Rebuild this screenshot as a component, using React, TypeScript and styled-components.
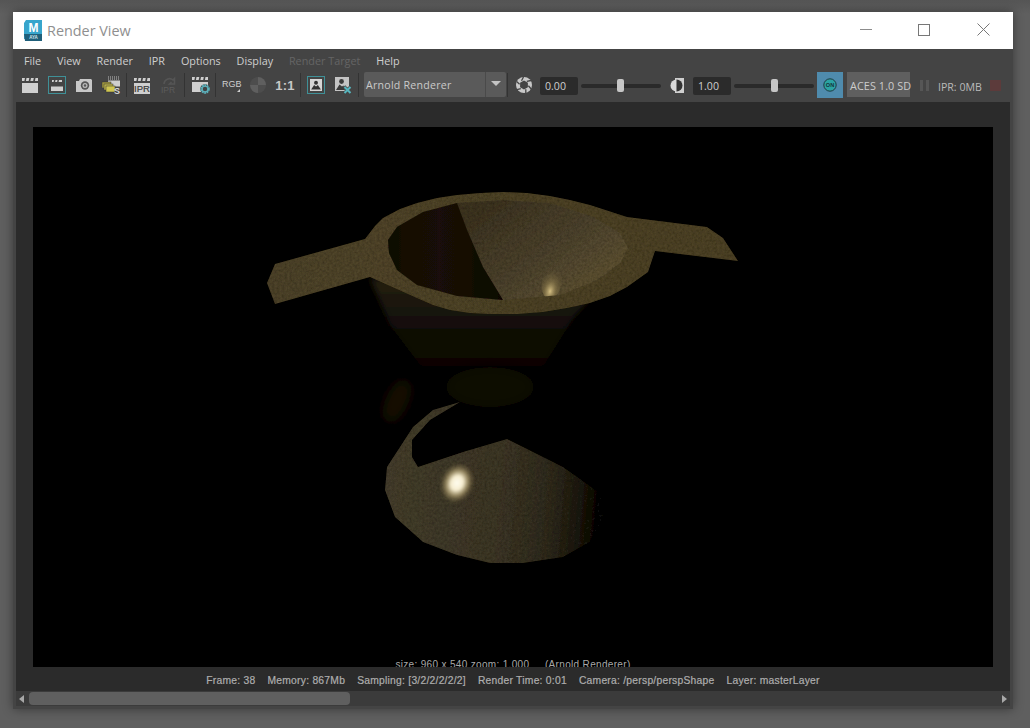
import React from "react";
import styled, { createGlobalStyle } from "styled-components";

const Global = createGlobalStyle`
  html, body { margin: 0; padding: 0; height: 728px; overflow: hidden; background: #5e5e5e; }
  #root { height: 728px; }
`;
const UI = `"Open Sans", "Noto Sans", sans-serif`;

const Desktop = styled.div`
  width: 1030px; height: 728px; box-sizing: border-box; padding: 12px 17px 19px 13px;
  background: linear-gradient(180deg, #555 0, #5f5f5f 14px, #5f5f5f 100%);
`;
const Win = styled.div`
  height: 100%; display: flex; flex-direction: column; background: #444;
  box-shadow: 0 0 10px rgba(0,0,0,.42);
`;
const TitleBar = styled.div`height: 37px; background: #fff; display: flex; align-items: center; padding-left: 10px;`;
const TitleText = styled.div`margin-left: 5px; font: 400 14.4px ${UI}; color: #8f8f8f; flex: 1;`;
const WinBtn = styled.div<{ $w: number }>`
  width: ${p => p.$w}px; height: 35px; margin-bottom: 2px; display: flex; align-items: center; justify-content: center; svg { display: block; }
`;
const MenuBar = styled.div`height: 23px; display: flex; align-items: center; padding-left: 11px; gap: 15.9px;`;
const MenuItem = styled.span<{ $dim?: boolean }>`
  font: 400 10.8px ${UI}; color: ${p => (p.$dim ? "#646464" : "#cfcfcf")};
`;
const Toolbar = styled.div`height: 30px; display: flex; align-items: flex-start; padding-left: 9px; box-sizing: border-box;`;
const Slot = styled.div<{ $w: number; $ml?: number; $boxed?: boolean }>`
  width: ${p => p.$w}px; height: 18px; margin: 4px 0 0 ${p => p.$ml ?? 0}px; flex: none; box-sizing: border-box;
  display: flex; align-items: center; justify-content: center;
  border: ${p => (p.$boxed ? "1px solid #3f9097" : "none")};
  svg { display: block; overflow: visible; }
`;
const Sep = styled.div<{ $ml: number }>`width: 1px; height: 24px; margin: 1px 0 0 ${p => p.$ml}px; background: #333; flex: none;`;
const RatioLabel = styled.span`font: 700 13px "Liberation Sans", sans-serif; color: #c8c8c8; letter-spacing: .2px;`;
const Dropdown = styled.div`
  width: 142px; height: 25px; margin: 0 0 0 5px; flex: none; display: flex; background: #5a5a5a; border-radius: 2px;
`;
const DropLabel = styled.div`flex: 1; padding-left: 2px; font: 400 10.6px/27px ${UI}; letter-spacing: .25px; color: #cacaca;`;
const DropArrow = styled.div`
  width: 20px; border-left: 1px solid #4a4a4a; display: flex; align-items: center; justify-content: center;
  &::after { content: ""; border: 5px solid transparent; border-top: 5px solid #c4c4c4; border-bottom: 0; margin-top: -3px; width: 0; height: 0; }
`;
const NumBox = styled.div<{ $ml: number }>`
  width: 38px; height: 18px; margin: 5px 0 0 ${p => p.$ml}px; flex: none; box-sizing: border-box; padding-left: 5px;
  background: #2b2b2b; border-radius: 2px; font: 400 10.6px/19px ${UI}; color: #cfcfcf;
`;
const Slider = styled.div<{ $ml: number }>`
  position: relative; width: 80px; height: 4px; margin: 12px 0 0 ${p => p.$ml}px; flex: none; background: #2a2a2a; border-radius: 2px;
`;
const Thumb = styled.div<{ $at: number }>`position: absolute; left: ${p => p.$at}px; top: -5px; width: 7px; height: 13px; border-radius: 2px; background: #c6c6c6;`;
const OnBtn = styled.div`
  width: 26px; height: 26px; margin-left: 3px; flex: none; background: #4f8bad; display: flex; align-items: center; justify-content: center;
`;
const Aces = styled.div`
  width: 63px; height: 25px; margin-left: 4px; flex: none; background: #5f5f5f; white-space: nowrap;
  padding-left: 3px; box-sizing: border-box; font: 400 10.8px/27px ${UI}; letter-spacing: .1px; color: #cccccc;
`;
const Mem = styled.div`margin-left: 9px; flex: none; font: 400 10.6px/30px ${UI}; color: #b9b9b9;`;
const Stop = styled.div`width: 11px; height: 11px; margin: 8px 0 0 8px; flex: none; background: #5c3b3b;`;
const Viewport = styled.div`flex: 1; margin: 0 3px; background: #2b2b2b; padding: 25px 17px 0; min-height: 0;`;
const Frame = styled.div`position: relative; width: 960px; height: 540px; background: #000; overflow: hidden; svg { display: block; }`;
const Overlay = styled.div`
  position: absolute; left: 0; right: 0; bottom: -3px; text-align: center; white-space: pre;
  font: 400 10px "Liberation Sans", sans-serif; letter-spacing: .33px; color: #a8a8a8;
`;
const Status = styled.div`height: 24px; padding-top: 2px; box-sizing: border-box; display: flex; justify-content: center; align-items: center; gap: 12px;`;
const StatusItem = styled.span`font: 400 10.3px "Liberation Sans", sans-serif; letter-spacing: .25px; color: #aeaeae; -webkit-text-stroke: .2px #aeaeae;`;
const Scroll = styled.div`
  height: 15px; margin: 0 3px 3px; background: #3b3b3b; display: flex; align-items: center; justify-content: space-between; padding: 0 3px;
`;
const ScrollThumb = styled.div`width: 321px; height: 13px; margin: 0 auto 0 5px; background: #5f5f5f; border-radius: 4px;`;
const Arrow = styled.div<{ $right?: boolean }>`
  width: 0; height: 0; border: 4px solid transparent;
  ${p => p.$right ? "border-left: 5px solid #a8a8a8; border-right: 0;" : "border-right: 5px solid #a8a8a8; border-left: 0;"}
`;

const Dashes = ({ c = "#cfcfcf" }: { c?: string }) => (
  <path d="M0 1h3l-.6 3H0zM4.500 1h2.800l-.6 3H3.900zM9 1h2.800l-.6 3H8.400zM13.500 1H16v3h-3.100z" fill={c} />
);
const Clapper = () => (
  <svg width="16" height="16" viewBox="0 0 16 16"><Dashes /><rect y="6" width="16" height="10" fill="#d0d0d0" /></svg>
);
const ClapperBoxed = () => (
  <svg width="12" height="11" viewBox="0 0 12 11"><path d="M1 0h2l-.4 2H1zM4.500 0h2l-.4 2h-2zM8 0h3v2H7.600z" fill="#cfcfcf" /><rect y="6.500" width="12" height="4.500" fill="#cfcfcf" /></svg>
);
const Camera = () => (
  <svg width="16" height="13" viewBox="0 0 16 13"><path d="M0 2h3l1-2h11l1 1v12H0z" fill="#c8c8c8" /><circle cx="9" cy="6.500" r="4.200" fill="#555" /><circle cx="9" cy="6.500" r="2.500" fill="#bbb" /><circle cx="9" cy="6.500" r="1.200" fill="#555" /></svg>
);
const Snap = () => (
  <svg width="18" height="18" viewBox="0 0 18 18">
    <path d="M6 1h12M6 3h12" stroke="#bcbcbc" strokeWidth="1" strokeDasharray="1 1" />
    <rect x="6" y="4.500" width="12" height="6" fill="#cfcfcf" />
    <rect x="0" y="6" width="9" height="6" fill="#a49b3e" stroke="#333" strokeWidth=".5" />
    <rect x="2" y="8" width="9" height="6" fill="#bdb44b" stroke="#333" strokeWidth=".5" />
    <rect x="4" y="10" width="9" height="6" fill="#cfc650" stroke="#333" strokeWidth=".5" />
    <text x="12" y="18" fontSize="9" fontWeight="700" fontFamily="Liberation Sans" fill="#d8d8d8">S</text>
  </svg>
);
const IprClapper = () => (
  <svg width="16" height="17" viewBox="0 0 16 17"><Dashes /><rect y="6" width="16" height="11" fill="#cfcfcf" />
    <text x="8" y="15.200" textAnchor="middle" fontSize="9.500" fontFamily="Liberation Sans" stroke="#383838" strokeWidth=".2" fill="#383838">IPR</text></svg>
);
const IprDim = () => (
  <svg width="18" height="18" viewBox="0 0 18 18">
    <path d="M4 8a5.500 5.500 0 0 1 9-4l1.500-1.500V8h-5L11.500 6M14 8" fill="none" stroke="#555" strokeWidth="1.600" />
    <text x="8" y="17" textAnchor="middle" fontSize="8.500" fontFamily="Liberation Sans" fill="#5c5c5c">IPR</text>
  </svg>
);
const ClapGear = () => (
  <svg width="18" height="18" viewBox="0 0 18 18"><Dashes />
    <rect y="6" width="16" height="10" fill="#d0d0d0" />
    <circle cx="13" cy="13" r="4.800" fill="#444" />
    <circle cx="13" cy="13" r="3.800" fill="none" stroke="#5cb2bd" strokeWidth="2" strokeDasharray="1.800 .6" />
    <circle cx="13" cy="13" r="2.800" fill="none" stroke="#5cb2bd" strokeWidth="1.100" />
  </svg>
);
const Rgb = () => (
  <svg width="18" height="16" viewBox="0 0 18 16"><text x="0" y="9.500" fontSize="9" fontFamily="Liberation Sans" fill="#cfcfcf">RGB</text><path d="M15 15h3v-3z" fill="#cfcfcf" /></svg>
);
const Checker = () => (
  <svg width="16" height="16" viewBox="0 0 16 16">
    <path d="M8 8V0a8 8 0 0 0-8 8z" fill="#4d4d4d" /><path d="M8 8V0a8 8 0 0 1 8 8z" fill="#5f5f5f" />
    <path d="M8 8v8a8 8 0 0 1-8-8z" fill="#5f5f5f" /><path d="M8 8v8a8 8 0 0 0 8-8z" fill="#4d4d4d" />
  </svg>
);
const Picture = ({ s = 16 }: { s?: number }) => (
  <svg width={s} height={s} viewBox="0 0 16 16"><rect width="16" height="16" fill="#d6d6d6" />
    <circle cx="8" cy="5" r="2.600" fill="#333" /><path d="M1.500 14l4-6 2.500 2 2.500-2 4 6z" fill="#333" /></svg>
);
const PictureX = () => (
  <svg width="17" height="17" viewBox="0 0 17 17"><rect width="14" height="14" fill="#c4c4c4" />
    <circle cx="6.500" cy="4.500" r="2.400" fill="#3a3a3a" /><path d="M1 13l3.500-5.500 2.500 2 1.500-1 1.500 4.500z" fill="#3a3a3a" />
    <path d="M9 9.500l7 7M16 9.500l-7 7" stroke="#444" strokeWidth="3.400" />
    <path d="M9.500 10l6 6M15.500 10l-6 6" stroke="#57b6bf" strokeWidth="2" /></svg>
);
const ApertureIcon = () => (
  <svg width="16" height="16" viewBox="0 0 16 16"><circle cx="8" cy="8" r="8" fill="#c8c8c8" />
    <path d="M5.500 3.800L7.500 0M10.800 4.300L15 3.500M12.400 8.800L15.200 12M9.800 12.200L9.800 16M4.800 11.600L1 12.600M3.600 7.200L.6 4.500" stroke="#444" strokeWidth="1.300" />
    <path d="M8 3.500l3.900 2.300v4.400L8 12.500 4.100 10.200V5.800z" fill="#444" /></svg>
);
const ContrastIcon = () => (
  <svg width="15" height="15" viewBox="0 0 15 15"><rect x="6" width="9" height="15" fill="#cfcfcf" />
    <path d="M7.500 1.500a6 6 0 0 0 0 12z" fill="#d8d8d8" /><path d="M7.500 1.500a6 6 0 0 1 0 12z" fill="#333" /></svg>
);
const OnIcon = () => (
  <svg width="14" height="14" viewBox="0 0 14 14"><circle cx="7" cy="7" r="6.200" fill="#2ba3a3" stroke="#1f3a40" strokeWidth="1" />
    <text x="7" y="9.100" textAnchor="middle" fontSize="5.600" fontWeight="700" fontFamily="Liberation Sans" fill="#16323a">ON</text></svg>
);
const Pause = () => (
  <svg width="9" height="11" viewBox="0 0 9 11"><rect width="3" height="11" fill="#565656" /><rect x="6" width="3" height="11" fill="#565656" /></svg>
);
const Logo = () => (
  <svg width="19" height="21" viewBox="0 0 19 21">
    <path d="M3 0h16v19H1V3z" fill="#37a5cc" />
    <path d="M1 14h18v7H2z" fill="#1f5f7a" />
    <text x="10.500" y="12" textAnchor="middle" fontSize="12" fontWeight="700" fontFamily="Liberation Sans" fill="#fff">M</text>
    <text x="10.500" y="19" textAnchor="middle" fontSize="4.500" fontWeight="700" fontFamily="Liberation Sans" fill="#cfe6ef">AYA</text>
  </svg>
);

const rim = "267,283 275,264 365,239 375,226 383,218 400,209 417,203 437,198 457,195 480,193 503,192 527,193 550,196 570,200 590,205 627,217 707,227 723,238 738,261 655,251 648,272 627,287 610,296 590,303 567,308 543,312 517,314 490,314 470,313 450,310 433,305 417,298 370,277 275,304";
const hole = "388,240 397,227 423,212 457,203 503,200 550,203 593,217 620,233 628,248 620,263 597,280 560,295 503,300 457,296 417,285 397,270 389,253";
const shadowPart = "388,240 397,227 423,212 457,203 467,230 483,267 503,300 457,296 417,285 397,270 389,253";
const lower = "460,402 433,410 413,427 387,467 385,490 395,517 423,542 457,555 490,563 523,563 563,557 590,542 604,517 600,493 563,467 507,439 463,452 418,467 412,457 412,440 430,420";

const RenderImage = () => (
  <svg width="960" height="540" viewBox="33 127 960 540">
    <defs>
      <clipPath id="holeClip"><polygon points={hole} /></clipPath>
      <filter id="soft" x="-5%" y="-5%" width="110%" height="110%"><feGaussianBlur stdDeviation=".7" /></filter>
      <filter id="blur3" x="-40%" y="-40%" width="180%" height="180%"><feGaussianBlur stdDeviation="3" /></filter>
      <filter id="blur1" x="-40%" y="-40%" width="180%" height="180%"><feGaussianBlur stdDeviation="1" /></filter>
      <filter id="blur6" x="-60%" y="-60%" width="220%" height="220%"><feGaussianBlur stdDeviation="6" /></filter>
      <filter id="grain" x="0" y="0" width="100%" height="100%">
        <feTurbulence type="fractalNoise" baseFrequency=".4" numOctaves="3" seed="4" result="n" />
        <feColorMatrix in="n" type="matrix" values="0 0 0 0 0  0 0 0 0 0  0 0 0 0 0  .7 0 0 0 -.22" result="a" />
        <feComposite in="a" in2="SourceAlpha" operator="in" result="speck" />
        <feMerge><feMergeNode in="SourceGraphic" /><feMergeNode in="speck" /></feMerge>
      </filter>
      <linearGradient id="rimG" x1="267" x2="738" y1="0" y2="0" gradientUnits="userSpaceOnUse">
        <stop offset="0" stopColor="#4d432a" /><stop offset=".25" stopColor="#514529" /><stop offset=".55" stopColor="#4d4328" /><stop offset="1" stopColor="#4d4228" />
      </linearGradient>
      <linearGradient id="holeG" x1="500" x2="570" y1="200" y2="295" gradientUnits="userSpaceOnUse">
        <stop offset="0" stopColor="#3e3523" /><stop offset=".6" stopColor="#4d432e" /><stop offset="1" stopColor="#5c5033" />
      </linearGradient>
      <linearGradient id="darkG" x1="388" x2="503" y1="0" y2="0" gradientUnits="userSpaceOnUse">
        <stop offset="0" stopColor="#0f0a04" /><stop offset=".45" stopColor="#1a1007" /><stop offset="1" stopColor="#0a0603" />
      </linearGradient>
      <linearGradient id="bodyG" x1="0" x2="0" y1="277" y2="375" gradientUnits="userSpaceOnUse">
        <stop offset="0" stopColor="#262011" /><stop offset=".5" stopColor="#120e07" /><stop offset="1" stopColor="#040302" />
      </linearGradient>
      <linearGradient id="lowerG" x1="385" x2="612" y1="490" y2="510" gradientUnits="userSpaceOnUse">
        <stop offset="0" stopColor="#453e2d" /><stop offset=".5" stopColor="#3d3727" /><stop offset=".72" stopColor="#312c1f" /><stop offset=".88" stopColor="#1b1811" /><stop offset="1" stopColor="#020201" />
      </linearGradient>
      <radialGradient id="spotA" cx=".5" cy=".5" r=".5">
        <stop offset="0" stopColor="#fffdf0" /><stop offset=".35" stopColor="#f6edcf" /><stop offset=".62" stopColor="#a8986c" stopOpacity=".8" /><stop offset="1" stopColor="#6a5c38" stopOpacity="0" />
      </radialGradient>
      <radialGradient id="spotB" cx=".5" cy=".78" r=".7">
        <stop offset="0" stopColor="#d6c084" /><stop offset=".4" stopColor="#8b7a4c" stopOpacity=".65" /><stop offset="1" stopColor="#5a4e30" stopOpacity="0" />
      </radialGradient>
    </defs>
    <polygon points="370,278 390,325 425,372 540,372 572,320 590,298" fill="url(#bodyG)" filter="url(#blur3)" />
    <ellipse cx="397" cy="401" rx="11" ry="23" transform="rotate(25 397 401)" fill="#151006" filter="url(#blur6)" />
    <ellipse cx="490" cy="387" rx="44" ry="20" fill="#0c0905" filter="url(#blur6)" />
    <g filter="url(#grain)">
      <g filter="url(#soft)">
        <polygon points={rim} fill="url(#rimG)" />
        <polygon points={hole} fill="url(#holeG)" />
      </g>
    </g>
    <polygon points={shadowPart} fill="url(#darkG)" filter="url(#soft)" />
    <g clipPath="url(#holeClip)">
      <ellipse cx="552" cy="282" rx="10" ry="17" transform="rotate(12 552 282)" fill="url(#spotB)" />
    </g>
    <g filter="url(#grain)">
      <polygon points={lower} fill="url(#lowerG)" filter="url(#soft)" />
    </g>
    <ellipse cx="457" cy="483" rx="17" ry="21" transform="rotate(22 457 483)" fill="url(#spotA)" filter="url(#blur1)" />
  </svg>
);

export default function App() {
  return (
    <Desktop>
      <Global />
      <Win>
        <TitleBar>
          <Logo />
          <TitleText>Render View</TitleText>
          <WinBtn $w={56}><svg width="12" height="1"><rect width="12" height="1" fill="#8c8c8c" /></svg></WinBtn>
          <WinBtn $w={60}><svg width="12" height="12"><rect x=".5" y=".5" width="11" height="11" fill="none" stroke="#777" /></svg></WinBtn>
          <WinBtn $w={59}><svg width="13" height="13"><path d="M.5.5l12 12M12.500.5l-12 12" stroke="#777" fill="none" /></svg></WinBtn>
        </TitleBar>
        <MenuBar>
          <MenuItem>File</MenuItem><MenuItem>View</MenuItem><MenuItem>Render</MenuItem><MenuItem>IPR</MenuItem>
          <MenuItem>Options</MenuItem><MenuItem>Display</MenuItem><MenuItem $dim>Render Target</MenuItem><MenuItem>Help</MenuItem>
        </MenuBar>
        <Toolbar>
          <Slot $w={16}><Clapper /></Slot>
          <Slot $w={18} $ml={10} $boxed><ClapperBoxed /></Slot>
          <Slot $w={16} $ml={10}><Camera /></Slot>
          <Slot $w={18} $ml={10}><Snap /></Slot>
          <Sep $ml={6} />
          <Slot $w={16} $ml={7}><IprClapper /></Slot>
          <Slot $w={18} $ml={10}><IprDim /></Slot>
          <Sep $ml={6} />
          <Slot $w={18} $ml={7}><ClapGear /></Slot>
          <Sep $ml={5} />
          <Slot $w={18} $ml={6}><Rgb /></Slot>
          <Slot $w={16} $ml={10}><Checker /></Slot>
          <Slot $w={16} $ml={11}><RatioLabel>1:1</RatioLabel></Slot>
          <Sep $ml={7} />
          <Slot $w={18} $ml={6} $boxed><Picture s={12} /></Slot>
          <Slot $w={17} $ml={10}><PictureX /></Slot>
          <Sep $ml={6} />
          <Dropdown><DropLabel>Arnold Renderer</DropLabel><DropArrow /></Dropdown>
          <Sep $ml={1} />
          <Slot $w={16} $ml={8}><ApertureIcon /></Slot>
          <NumBox $ml={8}>0.00</NumBox>
          <Slider $ml={3}><Thumb $at={36} /></Slider>
          <Slot $w={15} $ml={8}><ContrastIcon /></Slot>
          <NumBox $ml={9}>1.00</NumBox>
          <Slider $ml={3}><Thumb $at={37} /></Slider>
          <OnBtn><OnIcon /></OnBtn>
          <Aces>ACES 1.0 SD</Aces>
          <Slot $w={9} $ml={10}><Pause /></Slot>
          <Mem>IPR: 0MB</Mem>
          <Stop />
        </Toolbar>
        <Viewport>
          <Frame>
            <RenderImage />
            <Overlay>{"size: 960 x 540 zoom: 1.000     (Arnold Renderer)"}</Overlay>
          </Frame>
          <Status>
            <StatusItem>Frame: 38</StatusItem>
            <StatusItem>Memory: 867Mb</StatusItem>
            <StatusItem>Sampling: [3/2/2/2/2/2]</StatusItem>
            <StatusItem>Render Time: 0:01</StatusItem>
            <StatusItem>Camera: /persp/perspShape</StatusItem>
            <StatusItem>Layer: masterLayer</StatusItem>
          </Status>
        </Viewport>
        <Scroll><Arrow /><ScrollThumb /><Arrow $right /></Scroll>
      </Win>
    </Desktop>
  );
}
